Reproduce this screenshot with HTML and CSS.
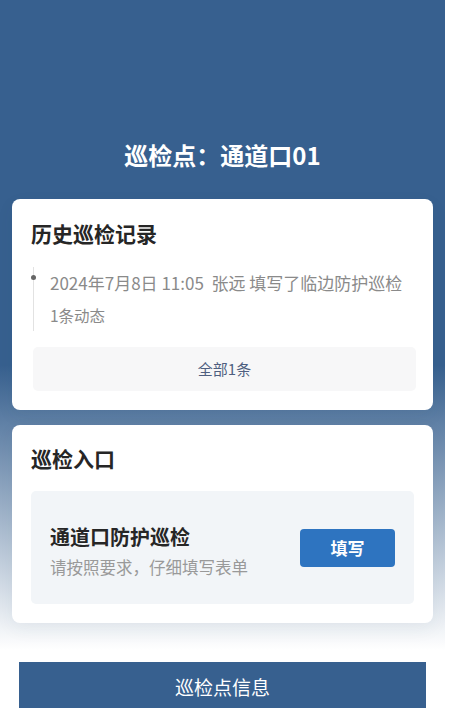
FILE: index.html
```html
<!DOCTYPE html>
<html lang="zh-CN">
<head>
<meta charset="utf-8">
<title>巡检点</title>
<link rel="stylesheet" href="styles.css">
</head>
<body>
<div class="page">
  <h1 class="title">巡检点：通道口01</h1>

  <section class="card">
    <h2 class="card-title">历史巡检记录</h2>
    <div class="timeline">
      <span class="dot"></span>
      <div class="tl-line">2024年7月8日 11:05&nbsp; 张远 填写了临边防护巡检</div>
      <div class="tl-line tl-sub">1条动态</div>
    </div>
    <div class="all-btn">全部1条</div>
  </section>

  <section class="card">
    <h2 class="card-title">巡检入口</h2>
    <div class="entry">
      <div class="entry-text">
        <div class="entry-name">通道口防护巡检</div>
        <div class="entry-desc">请按照要求，仔细填写表单</div>
      </div>
      <div class="fill-btn">填写</div>
    </div>
  </section>

  <div class="info-btn">巡检点信息</div>
</div>
</body>
</html>
```

FILE: styles.css
```css
* { box-sizing: border-box; margin: 0; padding: 0; }

html, body {
  background: #ffffff;
}

body {
  font-family: "Noto Sans CJK SC", "Noto Sans", sans-serif;
  overflow: hidden;
}

.page {
  width: 445px;
  min-height: 708px;
  padding: 138px 12px 0;
  background: linear-gradient(to bottom, #37608f 0, #37608f 365px, #ffffff 650px);
}

.title {
  color: #ffffff;
  font-size: 24px;
  font-weight: 700;
  line-height: 34px;
  text-align: center;
  margin-bottom: 27px;
}

.card {
  background: #ffffff;
  border-radius: 8px;
  padding: 19px;
  margin-bottom: 15px;
  box-shadow: 0 6px 18px rgba(40, 60, 90, 0.06);
}

.card-title {
  font-size: 21px;
  font-weight: 700;
  color: #262626;
  line-height: 30px;
}

.card + .card .card-title {
  line-height: 28px;
}

.timeline {
  position: relative;
  margin-top: 19px;
  margin-left: 2px;
  padding-left: 16px;
  border-left: 1px solid #e2e2e2;
}

.dot {
  position: absolute;
  left: -3px;
  top: 8px;
  width: 5px;
  height: 5px;
  border-radius: 50%;
  background: #666666;
}

.tl-line {
  font-size: 17px;
  line-height: 32px;
  color: #8a8a8a;
  white-space: nowrap;
}

.tl-sub {
  font-size: 15.5px;
}

.all-btn {
  margin: 16px -2px 0 2px;
  height: 44px;
  line-height: 44px;
  text-align: center;
  background: #f7f7f8;
  border-radius: 5px;
  font-size: 15px;
  color: #4f5f80;
}

.entry {
  margin-top: 19px;
  height: 113px;
  padding: 0 19px;
  background: #f2f5f8;
  border-radius: 5px;
  display: flex;
  align-items: center;
  justify-content: space-between;
}

.entry-text {
  margin-top: 9px;
}

.entry-name {
  font-size: 20px;
  font-weight: 700;
  color: #262626;
  line-height: 28px;
}

.entry-desc {
  margin-top: 2px;
  font-size: 16.5px;
  color: #999999;
  line-height: 28px;
}

.fill-btn {
  width: 95px;
  height: 38px;
  line-height: 38px;
  text-align: center;
  background: #2e74c0;
  color: #ffffff;
  font-size: 17px;
  font-weight: 700;
  border-radius: 4px;
}

.info-btn {
  margin: 39px 7px 0;
  height: 50px;
  line-height: 50px;
  text-align: center;
  background: #37608f;
  color: #ffffff;
  font-size: 19px;
}
```
